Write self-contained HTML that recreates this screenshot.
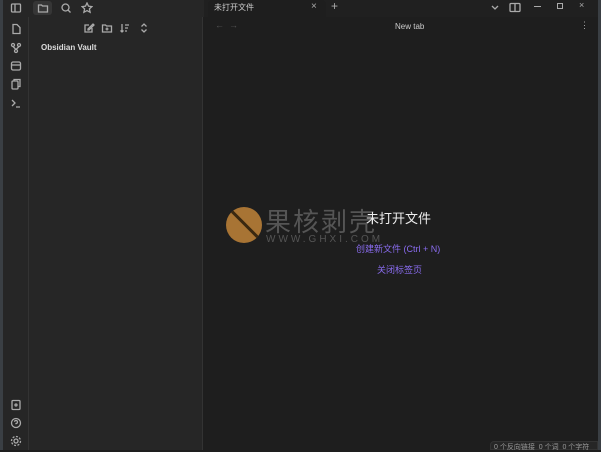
<!DOCTYPE html>
<html><head><meta charset="utf-8"><style>
*{margin:0;padding:0;box-sizing:border-box}
body{width:601px;height:450px;overflow:hidden;background:#1e1e1e;font-family:"Liberation Sans","Noto Sans CJK SC",sans-serif;position:relative;color:#ddd}
.a{position:absolute}
svg{stroke:#aaa;fill:none;stroke-width:1.3;position:absolute}
</style></head><body>
<div class="a" style="left:0;top:0;width:3px;height:450px;background:#3a3f44"></div>
<div class="a" style="left:598px;top:0;width:3px;height:450px;background:#3a3f44"></div>
<div class="a" style="left:3px;top:0;width:201px;height:17px;background:#262626"></div>
<div class="a" style="left:204px;top:0;width:394px;height:17px;background:#202020"></div>
<div class="a" style="left:3px;top:17px;width:26px;height:433px;background:#262626;border-right:1px solid #333"></div>
<div class="a" style="left:29px;top:17px;width:174px;height:433px;background:#262626;border-right:1px solid #333"></div>
<div class="a" style="left:208px;top:0;width:118px;height:17px;background:#1e1e1e;border-radius:4px 4px 0 0"></div>
<div class="a" style="left:214px;top:2px;font-size:8px;color:#ccc">未打开文件</div>
<div class="a" style="left:311px;top:1px;font-size:10px;color:#aaa">×</div>
<div class="a" style="left:331px;top:-1px;font-size:12px;color:#aaa">+</div>
<div class="a" style="left:33px;top:1px;width:19px;height:14px;background:#363636;border-radius:3px"></div>
<svg style="left:10px;top:2px" width="12" height="12"><rect x="1.5" y="2" width="9" height="8" rx="1"/><path d="M5 2v8"/></svg>
<svg style="left:37px;top:2px" width="12" height="12"><path d="M1.5 3h3l1 1h5v6h-9z"/></svg>
<svg style="left:60px;top:2px" width="12" height="12"><circle cx="5.5" cy="5.5" r="3.5"/><path d="M8 8l2.5 2.5"/></svg>
<svg style="left:81px;top:2px" width="12" height="12"><path d="M6 1l1.5 3.2 3.4.4-2.5 2.3.7 3.4L6 8.6 2.9 10.3l.7-3.4L1.1 4.6l3.4-.4z"/></svg>
<svg style="left:490px;top:3px" width="10" height="10"><path d="M2 3l3 3 3-3"/></svg>
<svg style="left:509px;top:2px" width="12" height="12"><rect x="1" y="1.5" width="10" height="8" rx="1"/><path d="M6 1.5v8"/></svg>
<div class="a" style="left:534px;top:6px;width:7px;height:1px;background:#aaa"></div>
<div class="a" style="left:557px;top:3px;width:6px;height:6px;border:1px solid #aaa"></div>
<div class="a" style="left:579px;top:0;font-size:9px;color:#aaa">×</div>
<svg style="left:10px;top:23px" width="12" height="12"><path d="M3 1.5h4l3 3v6H3z"/></svg>
<svg style="left:10px;top:42px" width="12" height="12"><circle cx="3" cy="3" r="1.5"/><circle cx="9" cy="3" r="1.5"/><circle cx="6" cy="9" r="1.5"/><path d="M3 4.5l3 3M9 4.5l-3 3"/></svg>
<svg style="left:10px;top:60px" width="12" height="12"><rect x="1.5" y="2" width="9" height="8" rx="1.5"/><path d="M1.5 5h9"/></svg>
<svg style="left:10px;top:78px" width="12" height="12"><rect x="2" y="3" width="6" height="8" rx="1"/><path d="M4 3V1.5h6v7H8"/></svg>
<svg style="left:10px;top:97px" width="12" height="12"><path d="M2 3l3 3-3 3M6 10h4"/></svg>
<svg style="left:10px;top:399px" width="12" height="12"><rect x="2" y="1.5" width="8" height="9" rx="1"/><circle cx="6" cy="6" r="1"/></svg>
<svg style="left:10px;top:417px" width="12" height="12"><circle cx="6" cy="6" r="4.5"/><path d="M4.5 4.7a1.5 1.5 0 1 1 1.5 1.8v.8"/></svg>
<svg style="left:10px;top:435px" width="12" height="12"><circle cx="6" cy="6" r="2"/><circle cx="6" cy="6" r="4.5" stroke-dasharray="2 1.5"/></svg>
<svg style="left:83px;top:22px" width="12" height="12"><path d="M9 6v4H2V3h4M5 7l5-5 1 1-5 5H5z"/></svg>
<svg style="left:101px;top:22px" width="12" height="12"><path d="M1.5 3h3l1 1h5v6h-9z M6 5.5v3M4.5 7h3"/></svg>
<svg style="left:119px;top:22px" width="12" height="12"><path d="M3 2v8M1.5 8.5L3 10l1.5-1.5M6 3h4M6 6h3M6 9h2"/></svg>
<svg style="left:138px;top:22px" width="12" height="12"><path d="M3.5 4.5L6 2l2.5 2.5M3.5 7.5L6 10l2.5-2.5"/></svg>
<div class="a" style="left:41px;top:43px;font-size:8px;font-weight:bold;color:#ddd">Obsidian Vault</div>
<div class="a" style="left:215px;top:20px;font-size:9px;color:#555">←&nbsp;&nbsp;→</div>
<div class="a" style="left:395px;top:22px;font-size:8px;color:#ccc">New tab</div>
<div class="a" style="left:580px;top:20px;font-size:9px;color:#aaa">⋮</div>
<div class="a" style="left:226px;top:207px;width:36px;height:36px;border-radius:50%;background:#a87434;overflow:hidden"><div style="position:absolute;left:-4px;top:16px;width:46px;height:3px;background:#3a2810;transform:rotate(45deg)"></div></div>
<div class="a" style="left:265px;top:202px;font-size:26px;color:#555;letter-spacing:2px">果核剥壳</div>
<div class="a" style="left:266px;top:234px;font-size:10px;color:#555;letter-spacing:3px">WWW.GHXI.COM</div>
<div class="a" style="left:366px;top:208px;font-size:13px;color:#eee">未打开文件</div>
<div class="a" style="left:356px;top:242px;font-size:9px;color:#8a6cf0">创建新文件 (Ctrl + N)</div>
<div class="a" style="left:377px;top:263px;font-size:9px;color:#8a6cf0">关闭标签页</div>
<div class="a" style="left:490px;top:441px;width:108px;height:9px;background:#262626;border-radius:4px 0 0 0;border:1px solid #333"></div>
<div class="a" style="left:494px;top:442px;font-size:7px;color:#999;white-space:nowrap">0 个反向链接 &nbsp;0 个词 &nbsp;0 个字符</div>
</body></html>
